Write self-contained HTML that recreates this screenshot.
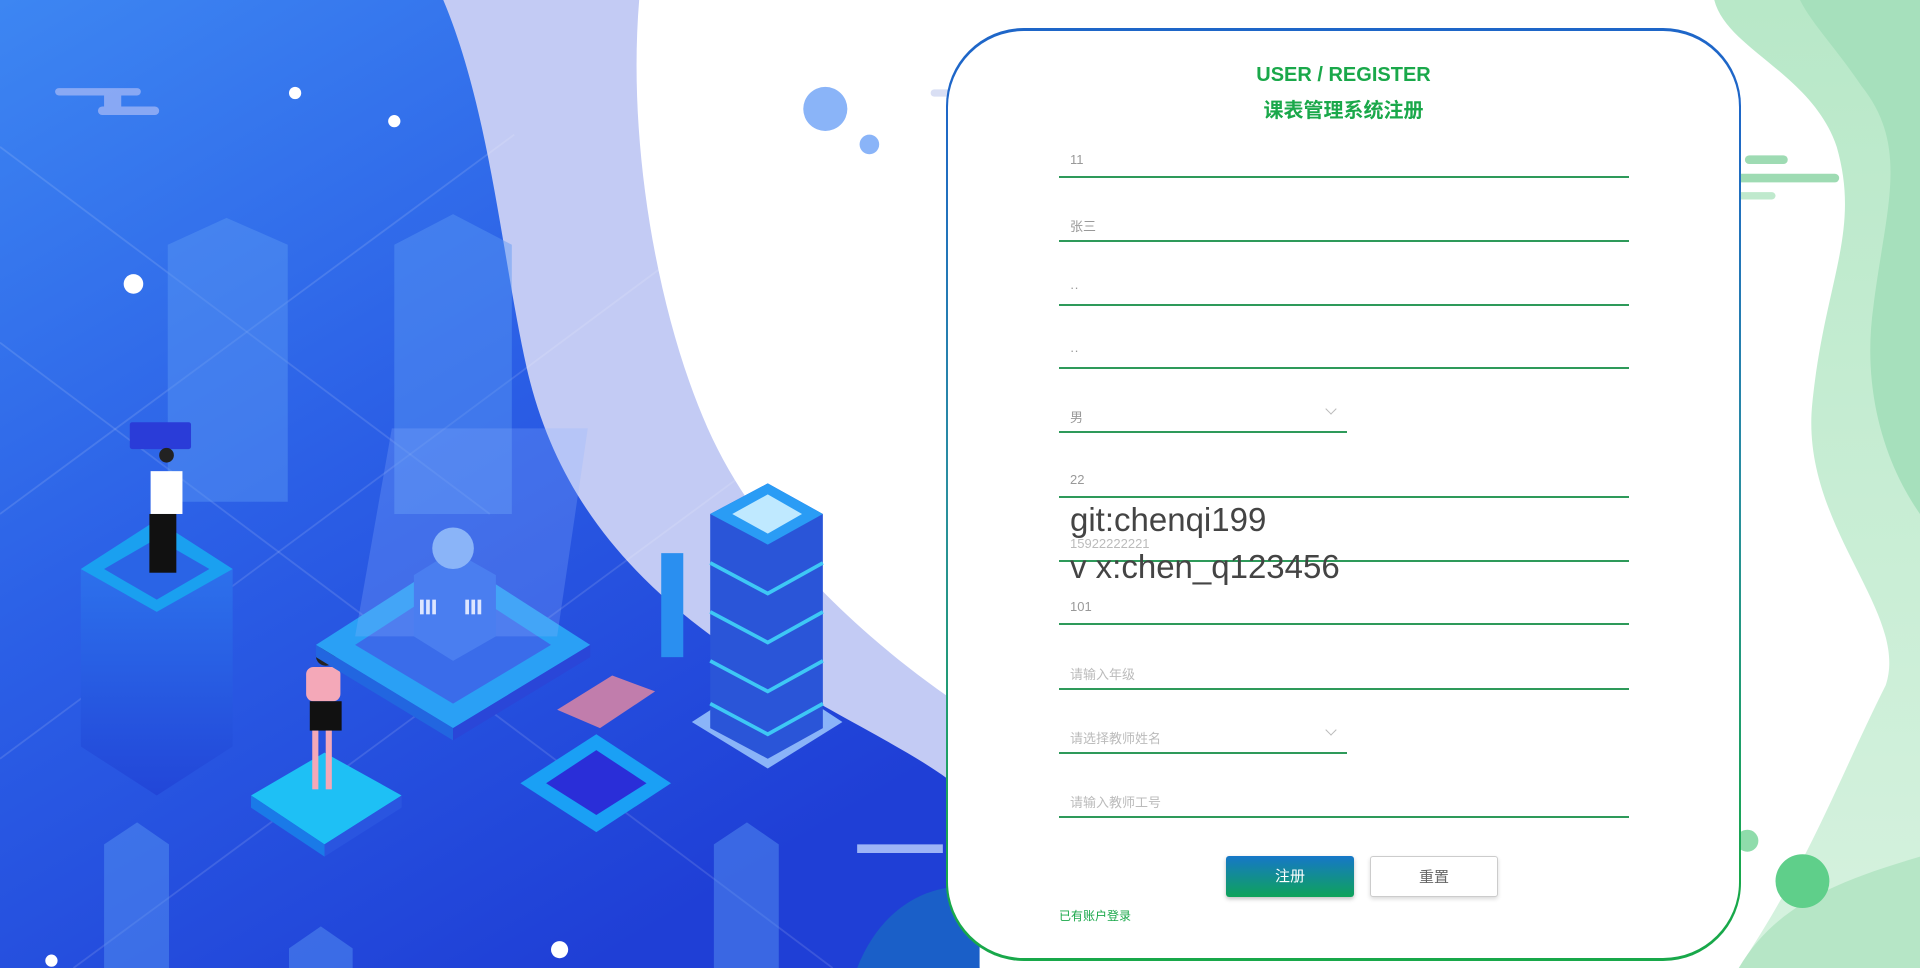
<!DOCTYPE html>
<html><head><meta charset="utf-8">
<style>
*{margin:0;padding:0;box-sizing:border-box}
html,body{width:1920px;height:968px;overflow:hidden;background:#fff;font-family:"Liberation Sans","Noto Sans CJK SC",sans-serif}
#bg{position:absolute;left:0;top:0;width:1920px;height:968px}
.card{position:absolute;left:946px;top:28px;width:795px;height:933px;border-radius:78px;background:linear-gradient(180deg,#1e66c8 0%,#1e66c8 8%,#2a8fa0 50%,#18a84a 92%,#18a84a 100%);padding:3px 2px 3px 2px}
.inner{width:100%;height:100%;border-radius:76px;background:#fff;position:relative}
.t1{position:absolute;left:0;right:0;top:33px;text-align:center;color:#1aa84a;font-weight:bold;font-size:20px}
.t2{position:absolute;left:0;right:0;top:63px;text-align:center;color:#1aa84a;font-weight:bold;font-size:20px}
.f{position:absolute;left:111px;width:570px;border-bottom:2.5px solid #2e9a5a;height:30px}
.f span{position:absolute;left:11px;top:4px;font-size:13px;color:#999}
.f.s{width:288px}
.f.s i{position:absolute;right:12px;top:2px;width:8px;height:8px;border-right:1px solid #bbb;border-bottom:1px solid #bbb;transform:rotate(45deg)}
.ov{position:absolute;left:122px;font-size:33px;color:#444}
.btn{position:absolute;top:825px;width:128px;height:41px;border-radius:3px;font-size:15px;text-align:center;line-height:41px}
.b1{left:278px;background:linear-gradient(180deg,#1677c8,#0fa35a);color:#fff;box-shadow:0 2px 4px rgba(0,0,0,.25)}
.b2{left:422px;background:#fff;border:1px solid #ccc;color:#666;box-shadow:0 2px 4px rgba(0,0,0,.15)}
.lg{position:absolute;left:111px;top:876px;font-size:12px;color:#1aa84a}
</style></head><body>
<svg id="bg" viewBox="0 0 1568 791" preserveAspectRatio="none">
<defs>
<linearGradient id="gb" x1="0" y1="0" x2="0.6" y2="1"><stop offset="0" stop-color="#3d86f2"/><stop offset="0.5" stop-color="#2b5fe6"/><stop offset="1" stop-color="#1f3fd6"/></linearGradient>
<linearGradient id="tw" x1="0" y1="0" x2="0" y2="1"><stop offset="0" stop-color="#2f7af0"/><stop offset="1" stop-color="#2246d8"/></linearGradient>
<linearGradient id="gg" x1="0" y1="0" x2="0" y2="1"><stop offset="0" stop-color="#b8e8c8"/><stop offset="1" stop-color="#d6f2df"/></linearGradient>
</defs>
<rect width="1568" height="791" fill="#fff"/>
<path d="M340,0 L522,0 C512,120 538,260 578,350 C618,440 700,520 790,580 L790,791 L0,791Z" fill="#c3cbf4"/>
<path d="M0,0 L362,0 C400,90 410,210 430,300 C455,410 520,480 610,540 C690,590 760,620 790,650 L800,791 L0,791Z" fill="url(#gb)"/>
<path d="M700,791 C720,740 760,720 800,725 L800,791Z" fill="#1a5fc8"/>
<path d="M1400,0 L1568,0 L1568,791 L1420,791 C1480,700 1500,640 1540,560 C1560,500 1470,430 1480,330 C1490,230 1520,190 1500,120 C1480,60 1410,40 1400,0Z" fill="url(#gg)"/>
<path d="M1470,0 L1568,0 L1568,420 C1540,380 1520,320 1530,250 C1540,170 1560,120 1520,70 C1500,40 1480,20 1470,0Z" fill="#a6e0bc"/>
<path d="M1420,791 C1450,740 1500,720 1568,700 L1568,791Z" fill="#b6e6c6"/>
<circle cx="1472" cy="720" r="22" fill="#5fcf8a"/>
<circle cx="1427" cy="687" r="9" fill="#8fdcab"/>
<g fill="#bfe9cd"><rect x="1370" y="157" width="80" height="6" rx="3"/><rect x="1410" y="142" width="92" height="7" rx="3.5" fill="#9edbb3"/><rect x="1425" y="127" width="35" height="7" rx="3.5" fill="#9edbb3"/></g>
<g stroke="#ffffff" stroke-opacity="0.12" stroke-width="1.5" fill="none"><path d="M0,120 L400,420"/><path d="M0,420 L420,110"/><path d="M0,620 L700,100"/><path d="M60,791 L780,260"/><path d="M0,280 L680,791"/></g>
<g fill="#9db4f6" opacity="0.8"><rect x="45" y="72" width="70" height="6" rx="3"/><rect x="80" y="87" width="50" height="7" rx="3.5"/><rect x="85" y="78" width="14" height="10"/></g>
<g fill="#fff"><circle cx="241" cy="76" r="5"/><circle cx="322" cy="99" r="5"/><circle cx="109" cy="232" r="8"/><circle cx="42" cy="785" r="5"/><circle cx="457" cy="776" r="7"/><circle cx="793" cy="660" r="5"/></g>
<circle cx="674" cy="89" r="18" fill="#8ab4f8"/><circle cx="710" cy="118" r="8" fill="#8ab4f8"/>
<g fill="#c9d2ef" opacity="0.7"><rect x="760" y="73" width="80" height="6" rx="3"/></g>
<g fill="#5a9af5" opacity="0.45"><path d="M137,200 L185,178 L235,200 L235,410 L137,410Z"/><path d="M322,200 L370,175 L418,200 L418,420 L322,420Z"/><path d="M85,690 L112,672 L138,690 L138,791 L85,791Z"/><path d="M583,690 L610,672 L636,690 L636,791 L583,791Z"/><path d="M236,775 L262,757 L288,775 L288,791 L236,791Z"/></g>
<path d="M66,465 L128,425 L190,465 L190,610 L128,650 L66,610Z" fill="url(#tw)"/>
<path d="M66,465 L128,500 L190,465 L128,425Z" fill="#1aa0f0"/>
<path d="M85,465 L128,440 L171,465 L128,490Z" fill="#2a64e6"/>
<rect x="106" y="345" width="50" height="22" rx="2" fill="#2a3cd8"/>
<rect x="123" y="385" width="26" height="35" fill="#fff"/><rect x="122" y="420" width="22" height="48" fill="#111"/><circle cx="136" cy="372" r="6" fill="#222"/>
<path d="M205,650 L265,615 L328,650 L265,690Z" fill="#1ec0f5"/><path d="M205,650 L265,690 L265,700 L205,660Z" fill="#1a7ae8"/><path d="M265,690 L328,650 L328,660 L265,700Z" fill="#2a55e0"/>
<rect x="250" y="545" width="28" height="28" rx="6" fill="#f4a8b8"/><rect x="253" y="573" width="26" height="24" fill="#111"/><rect x="255" y="597" width="5" height="48" fill="#f4a8b8"/><rect x="266" y="597" width="5" height="48" fill="#f4a8b8"/><circle cx="266" cy="536" r="8" fill="#222"/>
<path d="M258,527 L370,455 L482,527 L370,595Z" fill="#2aa0f5"/><path d="M258,527 L370,595 L370,605 L258,537Z" fill="#2266e0"/><path d="M370,595 L482,527 L482,537 L370,605Z" fill="#2a46d8"/>
<path d="M290,527 L370,475 L450,527 L370,575Z" fill="#3a6cea"/>
<path d="M290,520 L320,350 L480,350 L455,520Z" fill="#8fb4ff" opacity="0.25"/>
<path d="M338,470 L370,450 L405,470 L405,520 L370,540 L338,520Z" fill="#4a7ef0"/>
<circle cx="370" cy="448" r="17" fill="#8ab4f8"/>
<g fill="#dde6ff"><rect x="343" y="490" width="3" height="12"/><rect x="348" y="490" width="3" height="12"/><rect x="353" y="490" width="3" height="12"/><rect x="380" y="490" width="3" height="12"/><rect x="385" y="490" width="3" height="12"/><rect x="390" y="490" width="3" height="12"/></g>
<path d="M425,640 L487,600 L548,640 L487,680Z" fill="#1aa0f5"/><path d="M446,640 L487,613 L528,640 L487,666Z" fill="#2a2ed8"/>
<path d="M455,580 L500,552 L535,565 L490,595Z" fill="#e88aa0" opacity="0.8"/>
<path d="M565,590 L627,550 L688,590 L627,628Z" fill="#8ab4f8"/>
<path d="M580,420 L627,395 L672,420 L672,595 L627,620 L580,595Z" fill="#2a55d8"/>
<g stroke="#3ec8f5" stroke-width="3" fill="none"><path d="M580,460 L627,485 L672,460"/><path d="M580,500 L627,525 L672,500"/><path d="M580,540 L627,565 L672,540"/><path d="M580,575 L627,600 L672,575"/></g>
<path d="M580,420 L627,445 L672,420 L627,395Z" fill="#2a9cf5"/><path d="M598,420 L627,404 L655,420 L627,436Z" fill="#bfe9ff"/>
<rect x="540" y="452" width="18" height="85" fill="#2a8ff0"/>
<path d="M700,690 L770,690 L770,697 L700,697Z" fill="#9db4f6"/>
</svg>
<div class="card"><div class="inner">
<div class="t1">USER / REGISTER</div>
<div class="t2">课表管理系统注册</div>
<div class="f" style="top:117px"><span>11</span></div>
<div class="f" style="top:181px"><span>张三</span></div>
<div class="f" style="top:245px"><span>··</span></div>
<div class="f" style="top:308px"><span>··</span></div>
<div class="f s" style="top:372px"><span>男</span><i></i></div>
<div class="f" style="top:437px"><span>22</span></div>
<div class="f" style="top:501px"><span style="color:#bbb">15922222221</span></div>
<div class="f" style="top:564px"><span>101</span></div>
<div class="f" style="top:629px"><span style="color:#bbb">请输入年级</span></div>
<div class="f s" style="top:693px"><span style="color:#bbb">请选择教师姓名</span><i></i></div>
<div class="f" style="top:757px"><span style="color:#bbb">请输入教师工号</span></div>
<div class="ov" style="top:470px">git:chenqi199</div>
<div class="ov" style="top:517px">v x:chen_q123456</div>
<div class="btn b1">注册</div>
<div class="btn b2">重置</div>
<div class="lg">已有账户登录</div>
</div></div>
</body></html>
